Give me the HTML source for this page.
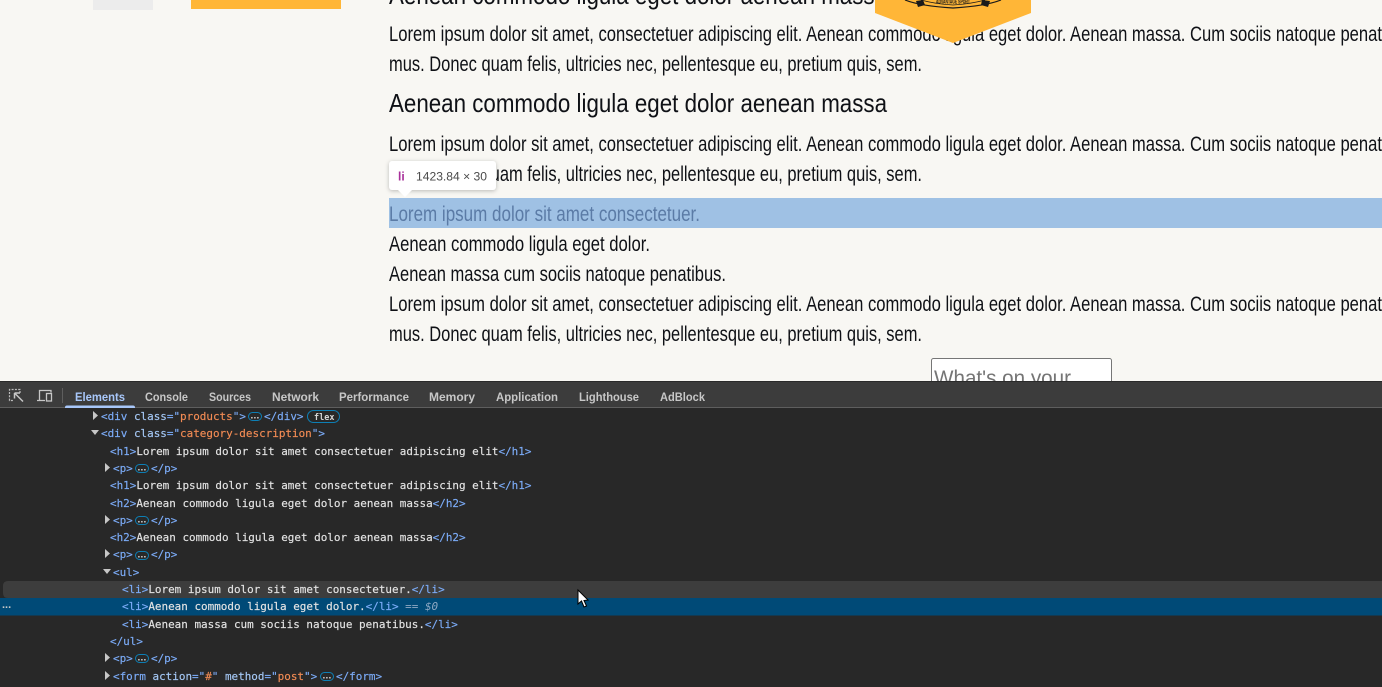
<!DOCTYPE html>
<html><head><meta charset="utf-8"><style>
html,body{margin:0;padding:0;width:1382px;height:687px;overflow:hidden;background:#f8f7f3}
svg{display:block}
.p{font-family:"Liberation Sans",sans-serif;font-size:21px;fill:#0f1116}
.h{font-size:26px}
.m{font-family:"DejaVu Sans Mono",monospace;font-size:10.95px;fill:#e3e3e3;stroke:#e3e3e3;stroke-width:.15px;white-space:pre}
.t{fill:#7cacf8;stroke:#7cacf8}.a{fill:#a5c8f5;stroke:#a5c8f5}.v{fill:#f28b54;stroke:#f28b54}
.tab{font-family:"Liberation Sans",sans-serif;font-size:12px;fill:#c7c7c7;font-weight:bold}
.e{font-family:"Liberation Sans",sans-serif;font-size:10px;font-weight:bold;fill:#d5d5d5;letter-spacing:.2px}
</style></head><body>
<svg width="1382" height="687" viewBox="0 0 1382 687" xmlns="http://www.w3.org/2000/svg" xml:space="preserve">
<rect width="1382" height="687" fill="#f8f7f3"/>
<rect x="93" y="0" width="60" height="10" fill="#ececec"/>
<rect x="191" y="0" width="150" height="9" fill="#ffb637"/>

<text class="p h" x="389" y="4" textLength="498" lengthAdjust="spacingAndGlyphs">Aenean commodo ligula eget dolor aenean massa</text>
<text class="p" x="389" y="41" textLength="993" lengthAdjust="spacingAndGlyphs">Lorem ipsum dolor sit amet, consectetuer adipiscing elit. Aenean commodo ligula eget dolor. Aenean massa. Cum sociis natoque penat</text>
<text class="p" x="389" y="71" textLength="533" lengthAdjust="spacingAndGlyphs">mus. Donec quam felis, ultricies nec, pellentesque eu, pretium quis, sem.</text>
<text class="p h" x="389" y="112" textLength="498" lengthAdjust="spacingAndGlyphs">Aenean commodo ligula eget dolor aenean massa</text>
<text class="p" x="389" y="151" textLength="993" lengthAdjust="spacingAndGlyphs">Lorem ipsum dolor sit amet, consectetuer adipiscing elit. Aenean commodo ligula eget dolor. Aenean massa. Cum sociis natoque penat</text>
<text class="p" x="389" y="181" textLength="533" lengthAdjust="spacingAndGlyphs">mus. Donec quam felis, ultricies nec, pellentesque eu, pretium quis, sem.</text>

<rect x="389" y="198" width="993" height="30" fill="#9fc1e4"/>
<text class="p" x="389" y="221" style="fill:#5b7ba6" textLength="311" lengthAdjust="spacingAndGlyphs">Lorem ipsum dolor sit amet consectetuer.</text>
<text class="p" x="389" y="251" textLength="261" lengthAdjust="spacingAndGlyphs">Aenean commodo ligula eget dolor.</text>
<text class="p" x="389" y="281" textLength="337" lengthAdjust="spacingAndGlyphs">Aenean massa cum sociis natoque penatibus.</text>
<text class="p" x="389" y="311" textLength="993" lengthAdjust="spacingAndGlyphs">Lorem ipsum dolor sit amet, consectetuer adipiscing elit. Aenean commodo ligula eget dolor. Aenean massa. Cum sociis natoque penat</text>
<text class="p" x="389" y="341" textLength="533" lengthAdjust="spacingAndGlyphs">mus. Donec quam felis, ultricies nec, pellentesque eu, pretium quis, sem.</text>

<!-- badge -->
<polygon points="875,0 1031,0 1031,13 953,43 875,13" fill="#ffb637"/>
<path d="M905,0 Q920,6 953,8 Q986,6 1001,0" fill="none" stroke="#1a1a1a" stroke-width="1.2"/>
<path d="M921,0 Q935,4 953,5 Q971,4 985,0" fill="none" stroke="#1a1a1a" stroke-width=".8"/>
<polygon points="916,1 923,0 925,5 918,7" fill="#1a1a1a"/>
<polygon points="982,0 990,1 988,7 981,5" fill="#1a1a1a"/>
<text x="936" y="3.5" font-family="Liberation Sans" font-size="5" font-weight="bold" fill="#1a1a1a" textLength="34" lengthAdjust="spacingAndGlyphs">ADVANTAGE SPORT</text>

<!-- textarea -->
<rect x="931.5" y="358.5" width="180" height="30" rx="2" fill="#fff" stroke="#767676"/>
<text class="p" x="934" y="385" style="fill:#757575" textLength="137" lengthAdjust="spacingAndGlyphs">What's on your</text>

<!-- tooltip -->
<g>
<rect x="389" y="161" width="107" height="29" rx="3" fill="#fff" style="filter:drop-shadow(0 1px 2px rgba(0,0,0,.25))"/>
<polygon points="397,189 413,189 405,197" fill="#fff"/>
<text x="398" y="180.5" font-family="Liberation Sans" font-size="12" font-weight="bold" fill="#a8309a">li</text>
<text x="416" y="180.5" font-family="Liberation Sans" font-size="12" fill="#4a4a4a" textLength="71" lengthAdjust="spacingAndGlyphs">1423.84 × 30</text>
</g>

<!-- devtools -->
<rect x="0" y="381" width="1382" height="306" fill="#282828"/>
<rect x="0" y="381" width="1382" height="26" fill="#3c3c3c"/>
<rect x="0" y="381" width="1382" height="1" fill="#2a2a2a"/>
<rect x="0" y="407" width="1382" height="1" fill="#5e5e5e"/>
<!-- inspect icon -->
<path d="M20 393V389.5H9.5V400.5H13" fill="none" stroke="#bdbdbd" stroke-width="1.2" stroke-dasharray="2 1.3"/>
<path d="M14.5 393H20M14.5 393V398.5M15 393.5L23 401.5" fill="none" stroke="#c7c7c7" stroke-width="1.5"/>
<!-- device icon -->
<path d="M37 400.5H45M39.5 400V390.5H51V392.5" fill="none" stroke="#c7c7c7" stroke-width="1.3"/>
<rect x="46.5" y="393.5" width="5" height="7.5" fill="none" stroke="#c7c7c7" stroke-width="1.3"/>
<rect x="62" y="388" width="1" height="15" fill="#5e5e5e"/>

<text class="tab" x="75" y="401" style="fill:#a8c7fa" textLength="50" lengthAdjust="spacingAndGlyphs">Elements</text>
<text class="tab" x="145" y="401" textLength="43" lengthAdjust="spacingAndGlyphs">Console</text>
<text class="tab" x="209" y="401" textLength="42" lengthAdjust="spacingAndGlyphs">Sources</text>
<text class="tab" x="272" y="401" textLength="47" lengthAdjust="spacingAndGlyphs">Network</text>
<text class="tab" x="339" y="401" textLength="70" lengthAdjust="spacingAndGlyphs">Performance</text>
<text class="tab" x="429" y="401" textLength="46" lengthAdjust="spacingAndGlyphs">Memory</text>
<text class="tab" x="496" y="401" textLength="62" lengthAdjust="spacingAndGlyphs">Application</text>
<text class="tab" x="579" y="401" textLength="60" lengthAdjust="spacingAndGlyphs">Lighthouse</text>
<text class="tab" x="660" y="401" textLength="45" lengthAdjust="spacingAndGlyphs">AdBlock</text>
<path d="M65 408V407.5Q65 405.5 67 405.5H133Q135 405.5 135 407.5V408Z" fill="#a8c7fa"/>

<!-- rows highlight -->
<path d="M8 581H1382V598H8Q3 598 3 593V586Q3 581 8 581Z" fill="#3d3d3d"/>
<rect x="0" y="598" width="1382" height="17.5" fill="#004a77"/>
<text x="2" y="608" font-family="Liberation Sans" font-size="11" font-weight="bold" fill="#c7c7c7">...</text>

<!-- row 1 -->
<polygon points="93,411 93,420 98,415.5" fill="#c7c7c7"/>
<text class="m" x="101" y="420"><tspan class="t">&lt;div </tspan><tspan class="a">class</tspan><tspan class="t">="</tspan><tspan class="v">products</tspan><tspan class="t">"&gt;</tspan></text>
<rect x="248.5" y="412.5" width="13" height="8" rx="4" fill="none" stroke="#0d7fb5"/>
<text class="e" x="250.5" y="418.5">...</text>
<text class="m" x="264" y="420"><tspan class="t">&lt;/div&gt;</tspan></text>
<rect x="307.5" y="410.5" width="32" height="12" rx="6" fill="none" stroke="#0d7fb5"/>
<text x="314" y="420" font-family="DejaVu Sans Mono" font-size="8.5" font-weight="bold" fill="#d5d5d5">flex</text>

<polygon points="91,430 99,430 95,435" fill="#c7c7c7"/>
<text class="m" x="101" y="437"><tspan class="t">&lt;div </tspan><tspan class="a">class</tspan><tspan class="t">="</tspan><tspan class="v">category-description</tspan><tspan class="t">"&gt;</tspan></text>

<text class="m" x="110" y="455"><tspan class="t">&lt;h1&gt;</tspan>Lorem ipsum dolor sit amet consectetuer adipiscing elit<tspan class="t">&lt;/h1&gt;</tspan></text>

<polygon points="105,463 105,472 110,467.5" fill="#c7c7c7"/>
<text class="m" x="113" y="472"><tspan class="t">&lt;p&gt;</tspan></text>
<rect x="135.5" y="464.5" width="13" height="8" rx="4" fill="none" stroke="#0d7fb5"/>
<text class="e" x="137.5" y="470.5">...</text>
<text class="m" x="151" y="472"><tspan class="t">&lt;/p&gt;</tspan></text>

<text class="m" x="110" y="489"><tspan class="t">&lt;h1&gt;</tspan>Lorem ipsum dolor sit amet consectetuer adipiscing elit<tspan class="t">&lt;/h1&gt;</tspan></text>
<text class="m" x="110" y="507"><tspan class="t">&lt;h2&gt;</tspan>Aenean commodo ligula eget dolor aenean massa<tspan class="t">&lt;/h2&gt;</tspan></text>

<polygon points="105,515 105,524 110,519.5" fill="#c7c7c7"/>
<text class="m" x="113" y="524"><tspan class="t">&lt;p&gt;</tspan></text>
<rect x="135.5" y="516.5" width="13" height="8" rx="4" fill="none" stroke="#0d7fb5"/>
<text class="e" x="137.5" y="522.5">...</text>
<text class="m" x="151" y="524"><tspan class="t">&lt;/p&gt;</tspan></text>

<text class="m" x="110" y="541"><tspan class="t">&lt;h2&gt;</tspan>Aenean commodo ligula eget dolor aenean massa<tspan class="t">&lt;/h2&gt;</tspan></text>

<polygon points="105,549 105,558 110,553.5" fill="#c7c7c7"/>
<text class="m" x="113" y="558"><tspan class="t">&lt;p&gt;</tspan></text>
<rect x="135.5" y="551.5" width="13" height="8" rx="4" fill="none" stroke="#0d7fb5"/>
<text class="e" x="137.5" y="557.5">...</text>
<text class="m" x="151" y="558"><tspan class="t">&lt;/p&gt;</tspan></text>

<polygon points="103,569 111,569 107,574" fill="#c7c7c7"/>
<text class="m" x="113" y="576"><tspan class="t">&lt;ul&gt;</tspan></text>

<text class="m" x="122" y="593"><tspan class="t">&lt;li&gt;</tspan>Lorem ipsum dolor sit amet consectetuer.<tspan class="t">&lt;/li&gt;</tspan></text>
<text class="m" x="122" y="610"><tspan class="t">&lt;li&gt;</tspan>Aenean commodo ligula eget dolor.<tspan class="t">&lt;/li&gt;</tspan><tspan fill="#8fa9c4" stroke="none"> == </tspan><tspan fill="#8fa9c4" stroke="none" font-style="italic">$0</tspan></text>
<text class="m" x="122" y="628"><tspan class="t">&lt;li&gt;</tspan>Aenean massa cum sociis natoque penatibus.<tspan class="t">&lt;/li&gt;</tspan></text>
<text class="m" x="110" y="645"><tspan class="t">&lt;/ul&gt;</tspan></text>

<polygon points="105,653 105,662 110,657.5" fill="#c7c7c7"/>
<text class="m" x="113" y="662"><tspan class="t">&lt;p&gt;</tspan></text>
<rect x="135.5" y="654.5" width="13" height="8" rx="4" fill="none" stroke="#0d7fb5"/>
<text class="e" x="137.5" y="660.5">...</text>
<text class="m" x="151" y="662"><tspan class="t">&lt;/p&gt;</tspan></text>

<polygon points="105,671 105,680 110,675.5" fill="#c7c7c7"/>
<text class="m" x="113" y="680"><tspan class="t">&lt;form </tspan><tspan class="a">action</tspan><tspan class="t">="</tspan><tspan class="v">#</tspan><tspan class="t">" </tspan><tspan class="a">method</tspan><tspan class="t">="</tspan><tspan class="v">post</tspan><tspan class="t">"&gt;</tspan></text>
<rect x="320.5" y="672.5" width="13" height="8" rx="4" fill="none" stroke="#0d7fb5"/>
<text class="e" x="322.5" y="678.5">...</text>
<text class="m" x="336" y="680"><tspan class="t">&lt;/form&gt;</tspan></text>

<!-- cursor -->
<polygon points="578,590 578,604 581.5,601 584,607 586.5,606 584,600.5 588,600" fill="#fff" stroke="#000" stroke-width="1"/>
</svg>
</body></html>
